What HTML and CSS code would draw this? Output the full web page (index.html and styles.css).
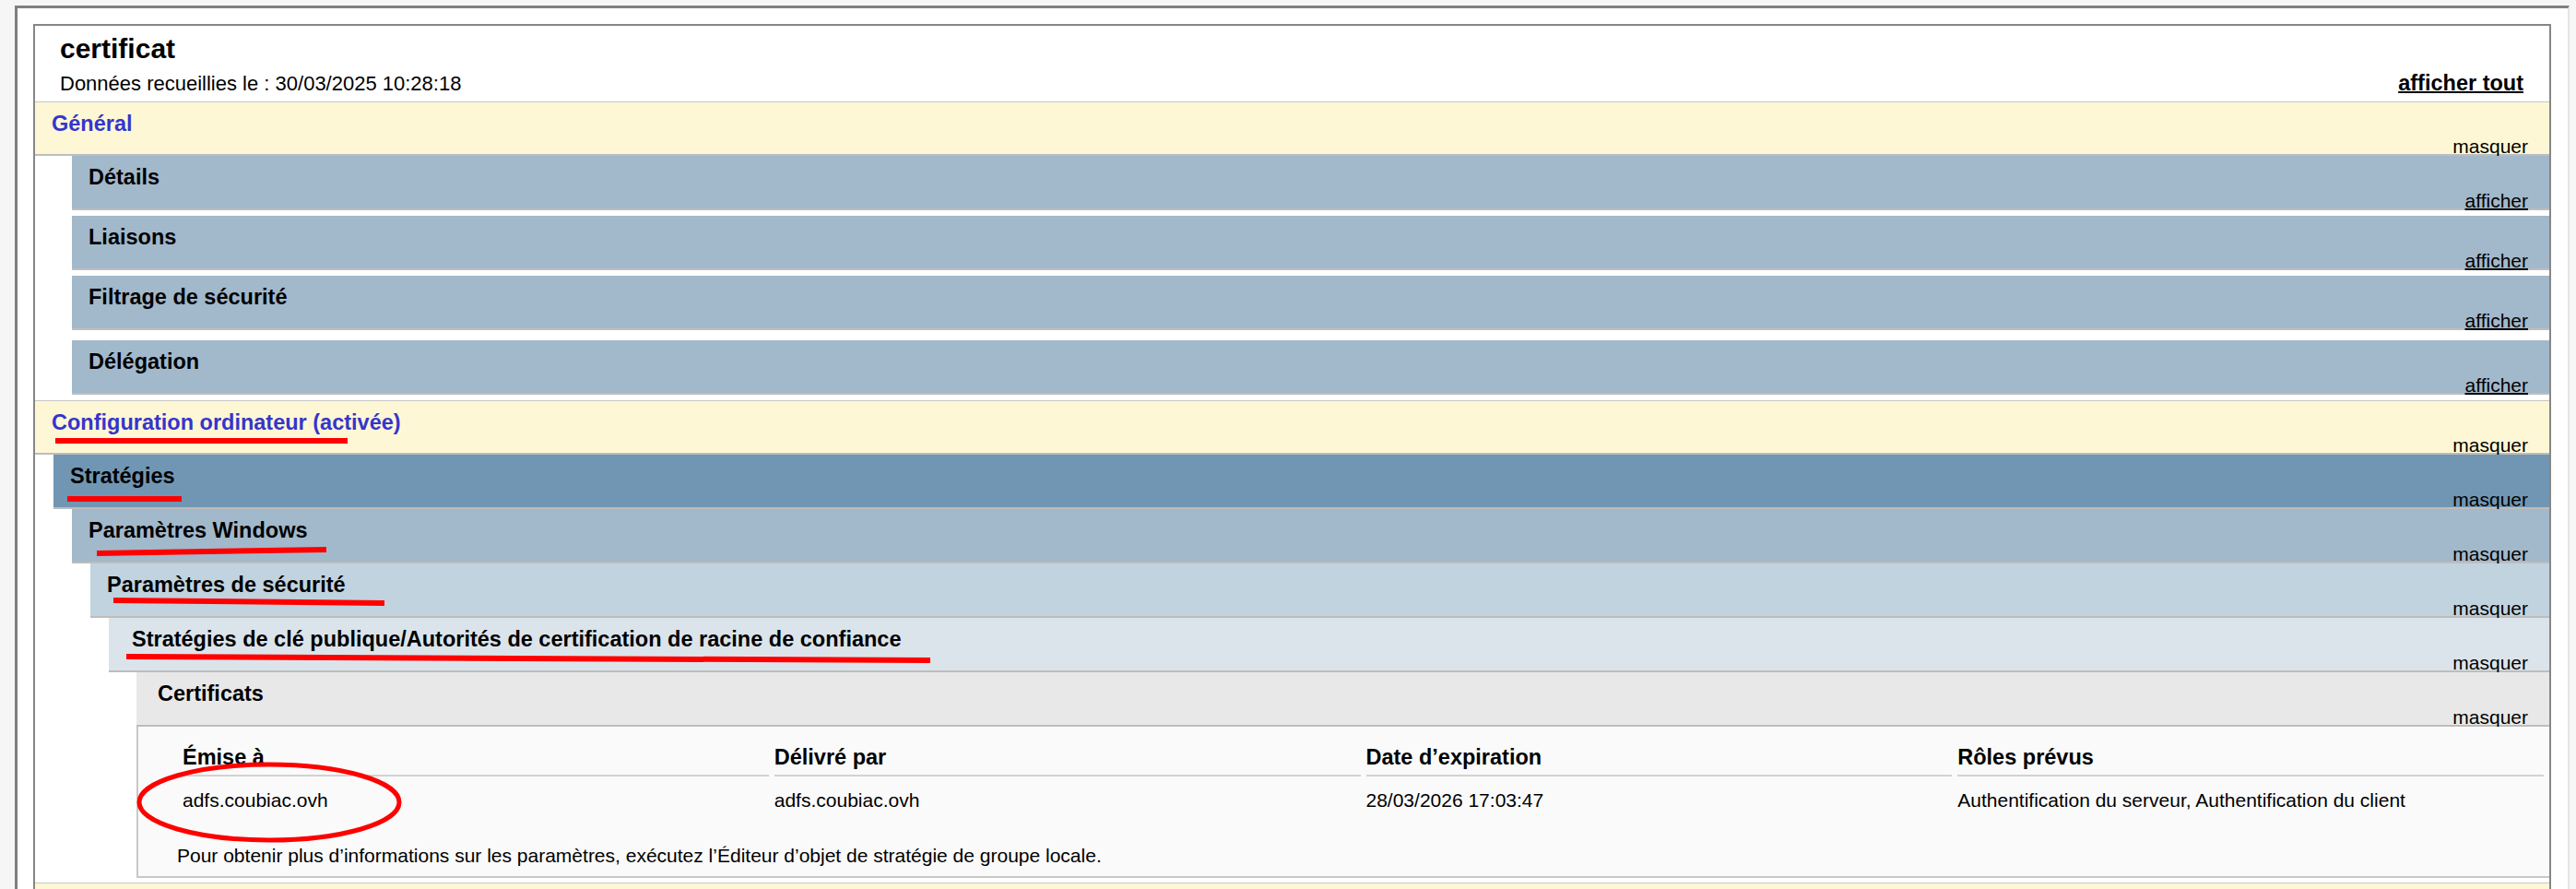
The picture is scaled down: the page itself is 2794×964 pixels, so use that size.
FILE: index.html
```html
<!DOCTYPE html>
<html lang="fr">
<head>
  <meta charset="UTF-8" />
  <meta name="viewport" content="width=device-width, initial-scale=1" />
  <title>certificat</title>
  <link rel="stylesheet" href="styles.css">
</head>
<body>
  <div class="frame">
    <div class="report">
      <div class="report-head">
        <h1 class="report-title">certificat</h1>
        <div class="report-meta">
          <span>Données recueillies le : 30/03/2025 10:28:18</span>
          <a class="show-all" href="#">afficher tout</a>
        </div>
      </div>

      <!-- Général -->
      <div class="he he0"><span class="he-title">Général</span><a class="he-toggle" href="#">masquer</a></div>
      <div class="container container-wide">
        <div class="block">
          <div class="he he1h"><span class="he-title">Détails</span><a class="he-toggle collapsed" href="#">afficher</a></div>
        </div>
        <div class="block">
          <div class="he he1h"><span class="he-title">Liaisons</span><a class="he-toggle collapsed" href="#">afficher</a></div>
        </div>
        <div class="block block-lg">
          <div class="he he1h"><span class="he-title">Filtrage de sécurité</span><a class="he-toggle collapsed" href="#">afficher</a></div>
        </div>
        <div class="block">
          <div class="he he1h"><span class="he-title">Délégation</span><a class="he-toggle collapsed" href="#">afficher</a></div>
        </div>
      </div>

      <!-- Configuration ordinateur -->
      <div class="he he0"><span class="he-title">Configuration ordinateur (activée)</span><a class="he-toggle" href="#">masquer</a></div>
      <div class="container">
        <div class="he he1"><span class="he-title">Stratégies</span><a class="he-toggle" href="#">masquer</a></div>
        <div class="container">
          <div class="he he2"><span class="he-title">Paramètres Windows</span><a class="he-toggle" href="#">masquer</a></div>
          <div class="container">
            <div class="he he3"><span class="he-title">Paramètres de sécurité</span><a class="he-toggle" href="#">masquer</a></div>
            <div class="container">
              <div class="he he4"><span class="he-title">Stratégies de clé publique/Autorités de certification de racine de confiance</span><a class="he-toggle" href="#">masquer</a></div>
              <div class="container container-deep">
                <div class="he he5"><span class="he-title">Certificats</span><a class="he-toggle" href="#">masquer</a></div>
                <div class="cert-box">
                  <table class="info">
                    <thead>
                      <tr>
                        <th>Émise à</th>
                        <th>Délivré par</th>
                        <th>Date d’expiration</th>
                        <th>Rôles prévus</th>
                      </tr>
                    </thead>
                    <tbody>
                      <tr>
                        <td>adfs.coubiac.ovh</td>
                        <td>adfs.coubiac.ovh</td>
                        <td>28/03/2026 17:03:47</td>
                        <td>Authentification du serveur, Authentification du client</td>
                      </tr>
                    </tbody>
                  </table>
                  <p class="cert-note">Pour obtenir plus d’informations sur les paramètres, exécutez l’Éditeur d’objet de stratégie de groupe locale.</p>
                </div>
              </div>
            </div>
          </div>
        </div>
      </div>

      <!-- Configuration utilisateur (hors écran) -->
      <div class="he he0"></div>
    </div>
  </div>

  <!-- annotations au feutre rouge -->
  <svg class="marks" viewBox="0 0 2794 964" width="2794" height="964">
    <g stroke="#ff0000" stroke-width="6" fill="none">
      <line x1="60" y1="478" x2="377" y2="478" />
      <line x1="73" y1="541" x2="197" y2="541" />
      <line x1="105" y1="600" x2="354" y2="596" />
      <line x1="123" y1="651" x2="417" y2="654" />
      <line x1="137" y1="712" x2="1009" y2="716" />
      <ellipse cx="292" cy="870" rx="141" ry="41" stroke-width="5" />
    </g>
  </svg>
</body>
</html>
```

FILE: styles.css
```css
body {
  margin: 0;
  position: relative;
  background: #f6f6f6;
  color: #000;
  font-family: "Liberation Sans", Arial, sans-serif;
  font-size: 21px;
}
a {
  color: #000;
}
.frame {
  margin: 6px 7px 0 16px;
  padding: 17px 18px 0 17px;
  background: #fff;
  border-top: 3px solid #7f7f7f;
  border-left: 3px solid #7f7f7f;
  border-right: 2px solid #e4e4e4;
}
.report {
  border: 2px solid #868686;
  border-bottom: none;
}
.report-head {
  padding: 7px 28px 5px 27px;
}
.report-title {
  margin: 0;
  font-size: 30px;
  line-height: 36px;
  font-weight: bold;
}
.report-meta {
  display: flex;
  justify-content: space-between;
  align-items: baseline;
  margin-top: 5px;
  font-size: 22px;
  line-height: 28px;
}
.show-all {
  font-weight: bold;
  font-size: 23.5px;
  text-decoration-thickness: 2px;
}

/* section headers */
.he {
  display: flex;
  justify-content: space-between;
  align-items: flex-start;
  box-sizing: border-box;
  height: 59px;
  padding: 9px 23px 0 18px;
  border-bottom: 2px solid #bdbdbd;
  overflow: hidden;
  overflow: clip;
  overflow-clip-margin: 2px;
}
.he-title {
  font-size: 23.5px;
  line-height: 28px;
  font-weight: bold;
  white-space: nowrap;
}
.he-toggle {
  align-self: flex-end;
  font-size: 21px;
  line-height: 16px;
  text-decoration: none;
}
.he-toggle.collapsed {
  text-decoration: underline;
  text-decoration-thickness: 2px;
}
.he0 {
  background: #fef7d5;
  border-top: 1px solid #c6c6c6;
}
.he0 .he-title {
  color: #3535cc;
}
.he1 {
  background: #7196b3;
}
.he1h,
.he2 {
  background: #a2b8cb;
}
.he3 {
  background: #c0d3df;
}
.he4 {
  background: #dbe4eb;
  padding-left: 25px;
}
.he5 {
  background: #e8e8e8;
  padding-left: 23px;
}

/* nesting */
.container {
  padding-left: 20px;
}
.container-wide {
  padding-left: 40px;
}
.container-deep {
  padding-left: 30px;
}
.block {
  margin-bottom: 6px;
}
.block-lg {
  margin-bottom: 11px;
}

/* certificate details */
.cert-box {
  padding: 19px 0 10px 42px;
  background: #fafafa;
  border-left: 2px solid #c8c8c8;
  border-bottom: 2px solid #c8c8c8;
  margin-bottom: 5px;
}
.info {
  width: 100%;
  table-layout: fixed;
  border-collapse: separate;
  border-spacing: 6px 0;
}
.info th {
  padding: 0 0 5px;
  text-align: left;
  font-size: 23.5px;
  line-height: 28px;
  font-weight: bold;
  border-bottom: 2px solid #d2d2d2;
}
.info td {
  padding: 13px 0 0;
  font-size: 21px;
  line-height: 25px;
  white-space: nowrap;
}
.cert-note {
  margin: 35px 0 0;
  font-size: 21px;
  line-height: 25px;
}

/* hand-drawn red marks laid over the report */
.marks {
  position: absolute;
  top: 0;
  left: 0;
  pointer-events: none;
}
```
